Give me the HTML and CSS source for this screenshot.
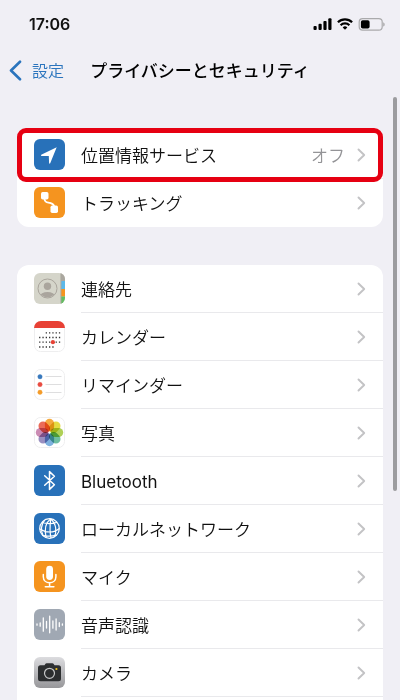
FILE: index.html
```html
<!DOCTYPE html>
<html lang="ja">
<head>
<meta charset="utf-8">
<meta name="viewport" content="width=device-width, initial-scale=1">
<title>プライバシーとセキュリティ</title>
<link rel="stylesheet" href="styles.css">
</head>
<body>
<svg class="defs" aria-hidden="true">
  <symbol id="chevron" viewBox="0 0 9 14"><path d="M1.500 1.500 7.200 7l-5.700 5.500" fill="none" stroke="#c3c3c5" stroke-width="1.900" stroke-linecap="round" stroke-linejoin="round"/></symbol>
  <symbol id="petal" viewBox="0 0 31 31"><rect x="10.900" y="1.800" width="9.200" height="12.600" rx="4.600"/></symbol>
</svg>
<div class="screen">
  <header>
    <div class="status">
      <span class="time">17:06</span>
      <div class="indicators">
        <svg width="20" height="12" viewBox="0 0 20 12" aria-hidden="true"><rect x="1.500" y="8" width="3.200" height="4" rx="1"/><rect x="6.500" y="5.800" width="3.200" height="6.200" rx="1"/><rect x="11.400" y="3" width="3.200" height="9" rx="1"/><rect x="16.300" y="0.300" width="3.200" height="11.700" rx="1"/></svg>
        <svg width="16" height="12" viewBox="0 0 16 12" fill="none" stroke="#000" stroke-width="2.200" aria-hidden="true"><path d="M.9 4.300a10.200 10.200 0 0 1 14.200 0M3.600 7.200a6.300 6.300 0 0 1 8.800 0"/><path d="M8 11.700 5.700 9.400a3.400 3.400 0 0 1 4.600 0z" fill="#000" stroke="none"/></svg>
        <svg width="27" height="13" viewBox="0 0 27 13" aria-hidden="true"><rect x="1.200" y="0.600" width="23" height="11.600" rx="3.400" fill="none" stroke="#aaaaac" stroke-width="1.200"/><rect x="2.900" y="2.300" width="8.700" height="8.200" rx="1.800"/><path d="M25.200 4.200c2 .8 2 3.600 0 4.400z" fill="#aaaaac"/></svg>
      </div>
    </div>
    <nav class="navbar">
      <a class="back" href="#"><svg width="13" height="21" viewBox="0 0 13 21" aria-hidden="true"><path d="M11 1.700 2 10.500l9 8.800" fill="none" stroke="#2a74bd" stroke-width="2.600" stroke-linecap="round" stroke-linejoin="round"/></svg><span class="back-text">設定</span></a>
      <h1>プライバシーとセキュリティ</h1>
    </nav>
  </header>
  <main>
    <section class="group">
      <a class="row highlighted" href="#">
        <svg class="icon" viewBox="0 0 31 31" aria-hidden="true"><rect width="31" height="31" rx="6" fill="#2871b9"/><path d="M22.700 8.200 7.200 15.800q-.6.900.3 1.100l7.300.1.300 7.200q.4.900 1.100.1z" fill="#fff"/></svg>
        <span class="label">位置情報サービス</span><span class="value">オフ</span>
        <svg class="chevron" aria-hidden="true"><use href="#chevron"/></svg>
      </a>
      <a class="row" href="#">
        <svg class="icon" viewBox="0 0 31 31" aria-hidden="true"><rect width="31" height="31" rx="6" fill="#f5941f"/><rect x="7" y="5" width="7.500" height="7.500" rx="1.700" fill="#fff"/><rect x="16.500" y="18.500" width="7.500" height="7.500" rx="1.700" fill="#fff"/><path d="M10.500 12c.3 4 3.200 3.300 5.500 3.900s4 1.600 4.200 3.600" fill="none" stroke="#fff" stroke-width="1.800"/></svg>
        <span class="label">トラッキング</span>
        <svg class="chevron" aria-hidden="true"><use href="#chevron"/></svg>
      </a>
    </section>
    <section class="group continued">
      <a class="row" href="#">
        <svg class="icon" viewBox="0 0 31 31" aria-hidden="true"><defs><clipPath id="tile"><rect width="31" height="31" rx="6"/></clipPath><clipPath id="avatar"><circle cx="13.500" cy="15.500" r="9"/></clipPath></defs><g clip-path="url(#tile)"><path fill="#d5d5ca" d="M0 0h31v31H0z"/><path fill="#aaa79f" d="M27 0h4v8h-4z"/><path fill="#5bb8ea" d="M27 8h4v8h-4z"/><path fill="#f5941f" d="M27 16h4v7.500h-4z"/><path fill="#63bd62" d="M27 23.500h4V31h-4z"/><path d="M26.900 0v31" stroke="#aaa99f"/></g><circle cx="13.500" cy="15.500" r="9.500" fill="none" stroke="#aaa59d"/><g clip-path="url(#avatar)" fill="#aaa59d"><circle cx="13.500" cy="13.300" r="3.700"/><ellipse cx="13.500" cy="23" rx="7.500" ry="4"/></g></svg>
        <span class="label">連絡先</span>
        <svg class="chevron" aria-hidden="true"><use href="#chevron"/></svg>
      </a>
      <a class="row" href="#">
        <svg class="icon" viewBox="0 0 31 31" aria-hidden="true"><rect x=".5" y=".5" width="30" height="30" rx="6" fill="#fff" stroke="#eeeeef"/><path d="M0 7a7 7 0 0 1 7-7h17a7 7 0 0 1 7 7z" fill="#e84135"/><g stroke="#333" stroke-width="1.300" stroke-dasharray="1.300 2"><path d="M11.700 11.800h14.700M5.100 16.500h21.300M5.100 21.200h21.300M5.100 26h14.700"/></g><circle cx="18.900" cy="21.200" r="2.100" fill="#e84135"/></svg>
        <span class="label">カレンダー</span>
        <svg class="chevron" aria-hidden="true"><use href="#chevron"/></svg>
      </a>
      <a class="row" href="#">
        <svg class="icon" viewBox="0 0 31 31" aria-hidden="true"><rect x=".5" y=".5" width="30" height="30" rx="6" fill="#fff" stroke="#eeeeef"/><path d="M11.500 7.500h16M11.500 15.500h16M11.500 23.500h16" stroke="#dededf"/><g stroke-opacity=".4"><circle cx="6" cy="7.700" r="2.200" fill="#3879bd" stroke="#3879bd"/><circle cx="6" cy="15.500" r="2.200" fill="#e84b40" stroke="#e84b40"/><circle cx="6" cy="23.300" r="2.200" fill="#f49b28" stroke="#f49b28"/></g></svg>
        <span class="label">リマインダー</span>
        <svg class="chevron" aria-hidden="true"><use href="#chevron"/></svg>
      </a>
      <a class="row" href="#">
        <svg class="icon" viewBox="0 0 31 31" aria-hidden="true"><rect x=".5" y=".5" width="30" height="30" rx="6" fill="#fff" stroke="#eeeeef"/><g class="petals"><use href="#petal" fill="#f4a12b"/><use href="#petal" fill="#e2d72e" transform="rotate(45 15.500 15.500)"/><use href="#petal" fill="#a6cb43" transform="rotate(90 15.500 15.500)"/><use href="#petal" fill="#5eb796" transform="rotate(135 15.500 15.500)"/><use href="#petal" fill="#70a9db" transform="rotate(180 15.500 15.500)"/><use href="#petal" fill="#8e83b9" transform="rotate(225 15.500 15.500)"/><use href="#petal" fill="#c67fac" transform="rotate(270 15.500 15.500)"/><use href="#petal" fill="#e95b47" transform="rotate(315 15.500 15.500)"/></g><circle cx="15.500" cy="15.500" r=".8" fill="#fff"/></svg>
        <span class="label">写真</span>
        <svg class="chevron" aria-hidden="true"><use href="#chevron"/></svg>
      </a>
      <a class="row" href="#">
        <svg class="icon" viewBox="0 0 31 31" aria-hidden="true"><rect width="31" height="31" rx="6" fill="#2871b9"/><path d="m10.700 10.800 9.700 8.900-4.900 4.700V6.600l4.900 4.700-9.700 8.900" fill="none" stroke="#fff" stroke-width="1.500" stroke-linejoin="round" stroke-linecap="round"/></svg>
        <span class="label latin">Bluetooth</span>
        <svg class="chevron" aria-hidden="true"><use href="#chevron"/></svg>
      </a>
      <a class="row" href="#">
        <svg class="icon" viewBox="0 0 31 31" aria-hidden="true"><rect width="31" height="31" rx="6" fill="#2871b9"/><g fill="none" stroke="#fff" stroke-width="1.200"><circle cx="15.500" cy="15.500" r="9.800"/><path d="M8 9.300q7 2.900 15.300-.1M5.800 16q4.500 3 10 3t9.500-3.500M8.500 22.300q7.500 1.800 14-.2M16.700 5.700c-4.400 3.500-7.100 8.600-4.500 18.700M10.700 7.200c-3.800 5-4 10.500-1.500 15.500M16.700 5.700c5.800 5.300 6.300 13.300 3.500 18.400M16.700 5.700c-.8 6.800-1.200 13.100.3 19.400"/></g></svg>
        <span class="label">ローカルネットワーク</span>
        <svg class="chevron" aria-hidden="true"><use href="#chevron"/></svg>
      </a>
      <a class="row" href="#">
        <svg class="icon" viewBox="0 0 31 31" aria-hidden="true"><rect width="31" height="31" rx="6" fill="#f5941f"/><rect x="12.200" y="4.700" width="6.800" height="14.300" rx="3.400" fill="#fff"/><path d="M9.300 13.500v2.300c0 8 12.600 8 12.600 0v-2.300M15.600 22v3.300M11.300 25.700h8.600" fill="none" stroke="#fff" stroke-width="1.500" stroke-linecap="round"/></svg>
        <span class="label">マイク</span>
        <svg class="chevron" aria-hidden="true"><use href="#chevron"/></svg>
      </a>
      <a class="row" href="#">
        <svg class="icon" viewBox="0 0 31 31" aria-hidden="true"><rect width="31" height="31" rx="6" fill="#a0a8b3"/><path d="M3 15v1.200M6.200 14v3.200M9.300 9v13.200M12.500 12.500V19M15.700 7.200v16.600M18.900 12v7.200M22.100 10v11M25.300 13.700v3.800M28.400 15v1.200" fill="none" stroke="#fff" stroke-width="1.300" stroke-linecap="round"/></svg>
        <span class="label">音声認識</span>
        <svg class="chevron" aria-hidden="true"><use href="#chevron"/></svg>
      </a>
      <a class="row" href="#">
        <svg class="icon" viewBox="0 0 31 31" aria-hidden="true"><defs><linearGradient id="metal" x2="0" y2="1"><stop stop-color="#dcdcdf"/><stop offset="1" stop-color="#97979a"/></linearGradient></defs><rect width="31" height="31" rx="6" fill="url(#metal)"/><path d="M6.500 8.300h4l1-1.500q.4-.6 1.100-.6h5.800q.7 0 1.100.6l1 1.500h4q2.500 0 2.500 2.500v11q0 2.500-2.500 2.500h-18Q4 24.300 4 21.800v-11q0-2.500 2.500-2.500z" fill="#2c2e30"/><circle cx="15.500" cy="16.300" r="5" fill="#2c2e30" stroke="#c5c6c7" stroke-width="1.200"/><circle cx="22.400" cy="12" r="1.100" fill="#f4c51c"/></svg>
        <span class="label">カメラ</span>
        <svg class="chevron" aria-hidden="true"><use href="#chevron"/></svg>
      </a>
    </section>
  </main>
  <div class="scrollbar"></div>
</div>
</body>
</html>
```
FILE: styles.css
```css
* {
  box-sizing: border-box;
}

body {
  margin: 0;
  background: #f0eff5;
  color: #111;
  font-family: Inter, "Noto Sans CJK JP", sans-serif;
  font-size: 17px;
  line-height: 24px;
}

a {
  color: inherit;
  text-decoration: none;
}

.defs {
  position: absolute;
  width: 0;
  height: 0;
}

.screen {
  position: relative;
  display: flex;
  flex-direction: column;
  height: 100vh;
  overflow: hidden;
}

.status {
  display: flex;
  align-items: center;
  justify-content: space-between;
  height: 48px;
  padding: 0 15px 0 29px;
}

.time {
  font-size: 16px;
  font-weight: 600;
}

.indicators {
  display: flex;
  align-items: center;
  gap: 5px;
}

.navbar {
  display: grid;
  grid-template-columns: 1fr auto 1fr;
  align-items: center;
  height: 44px;
  padding: 0 9px;
}

.back {
  display: flex;
  align-items: center;
  gap: 10px;
  color: #2a74bd;
  font-size: 16px;
  font-weight: 350;
}

.back-text,
h1 {
  padding-top: 2px;
}

h1 {
  margin: 0;
  color: #000;
  font-size: 17px;
  font-weight: 500;
}

main {
  flex: 1;
  display: flex;
  flex-direction: column;
  gap: 38px;
  min-height: 0;
  padding: 39px 17px 0;
}

.group {
  flex: none;
  border-radius: 12px;
  background: #fff;
}

.continued {
  flex: 1;
  border-radius: 12px 12px 0 0;
}

.row {
  position: relative;
  display: flex;
  align-items: center;
  height: 48px;
  padding: 0 17px 1px;
  background: linear-gradient(#e9e9ec, #e9e9ec) 64px 100% / 100% 1px no-repeat;
}

.group:not(.continued) .row:last-child {
  background: none;
}

.highlighted::after {
  content: "";
  position: absolute;
  inset: -3px 0;
  border: 5px solid #e60012;
  border-radius: 9px;
}

.icon {
  flex: none;
  width: 31px;
  height: 31px;
  margin-right: 16px;
}

.petals use {
  mix-blend-mode: multiply;
  opacity: 0.9;
}

.label {
  flex: 1;
  padding-top: 3px;
  font-weight: 350;
}

.latin {
  font-weight: 400;
}

.value {
  padding-top: 3px;
  color: #949497;
  font-weight: 350;
}

.chevron {
  flex: none;
  width: 9px;
  height: 14px;
  margin-left: 12px;
}

.scrollbar {
  position: absolute;
  top: 97px;
  right: 3px;
  width: 4px;
  height: 394px;
  border-radius: 2px;
  background: #9c9c9f;
}
```
